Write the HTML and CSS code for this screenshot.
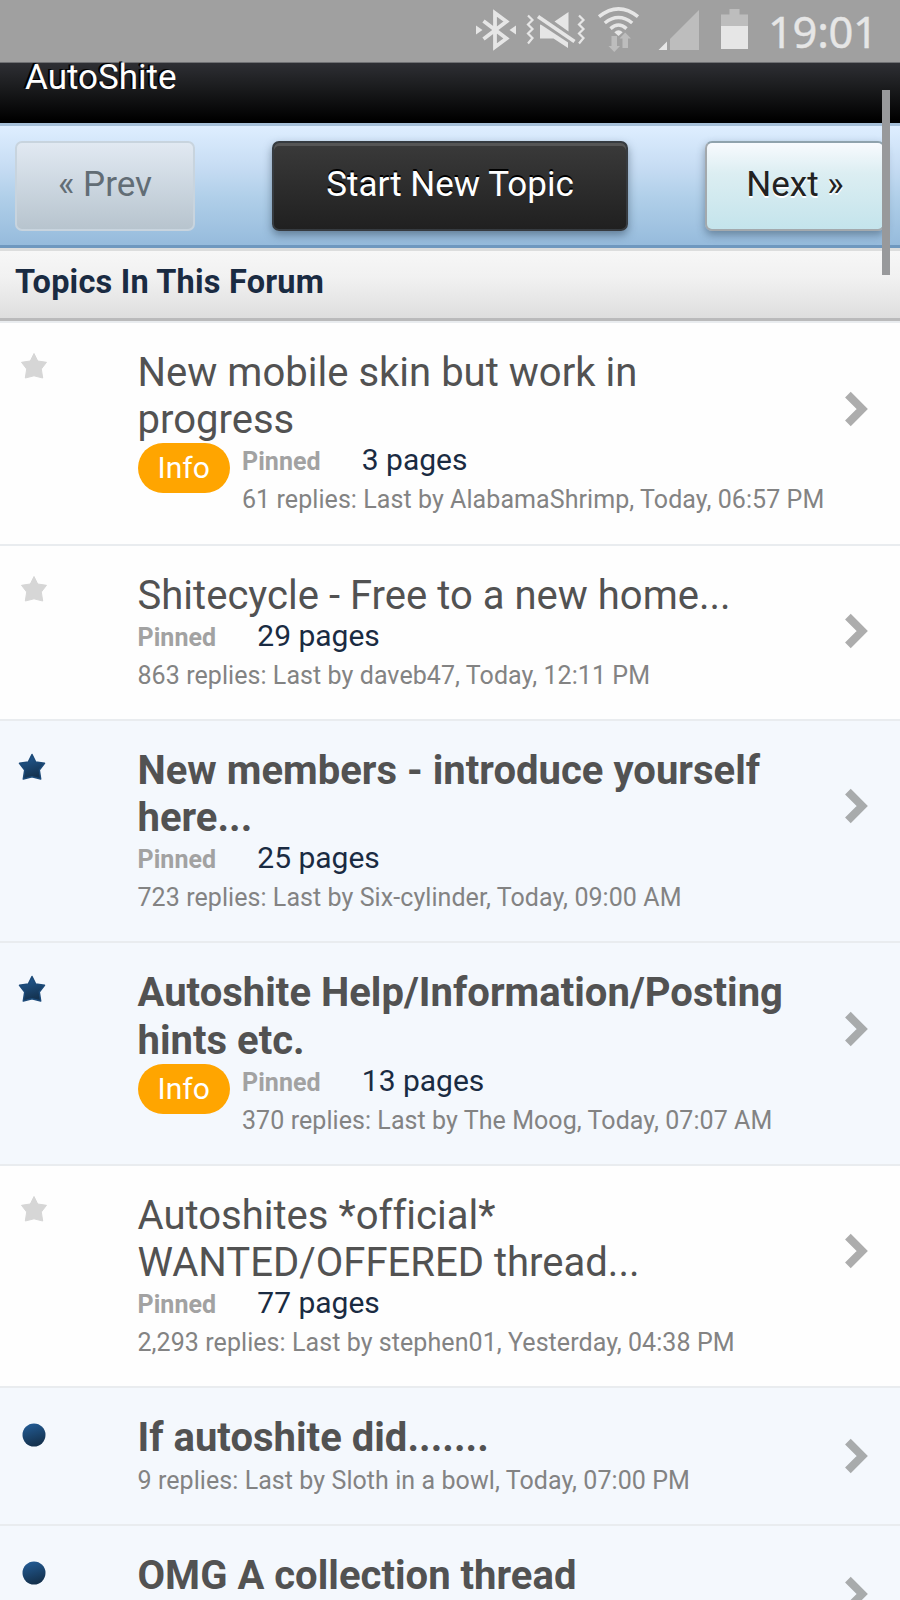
FILE: index.html
```html
<!DOCTYPE html>
<html lang="en">
<head>
<meta charset="utf-8">
<title>AutoShite</title>
<link rel="stylesheet" href="styles.css">
</head>
<body>
<svg class="defs" width="0" height="0" aria-hidden="true">
  <defs>
    <linearGradient id="navy" x1="0" y1="0" x2="0.3" y2="1"><stop offset="0" stop-color="#245f9a"/><stop offset="1" stop-color="#14324f"/></linearGradient>
    <symbol id="star" viewBox="0 0 28 28"><path d="M14 1.500 17.700 9 26.500 10.300 21.300 17 22.700 26 14 23.800 5.300 26 6.700 17 1.500 10.300 10.300 9Z" stroke-linejoin="round"/></symbol>
    <symbol id="dot" viewBox="0 0 24 24"><circle cx="12" cy="12" r="11.5"/></symbol>
    <symbol id="chevron" viewBox="0 0 23 36"><path d="M2.900 3.700 17.200 18 2.900 32.300" fill="none" stroke="currentColor" stroke-width="8"/></symbol>
  </defs>
</svg>
<div class="screen">
  <header class="status">
    <svg class="status-icons" width="300" height="62" viewBox="460 0 300 62">
      <g fill="#e6e6e6">
        <path d="M476 25.500V34.500L482.500 30ZM516 25.500V34.500L509.500 30Z"/>
        <path d="M483.500 21 506.500 38.500 495 47V13L506.500 21.500 483.500 39" fill="none" stroke="#e6e6e6" stroke-width="3.800"/>
        <path d="M540 24.500H544L558 34 568 41.500V48L553.500 38.500H540ZM554.500 21.500 568.500 12V31.500Z"/>
        <path d="M537 17 575 42" stroke="#a0a0a0" stroke-width="8.500"/>
        <path d="M538 16.500 574.500 41.500" stroke="#e6e6e6" stroke-width="3.800"/>
        <path d="M528 15.500 532.500 20 528 24.500 532.500 29 528 33.500 532.500 38 528 43.500M579 15.500 583.500 20 579 24.500 583.500 29 579 33.500 583.500 38 579 43.500" fill="none" stroke="#e6e6e6" stroke-width="2.200"/>
        <path d="M599 16.700Q618.500 1 638 16.700M604.800 23Q618.500 12 632.200 23M610.500 28.600Q618.500 21.500 626.500 28.600" fill="none" stroke="#e6e6e6" stroke-width="3.500"/>
        <path d="M614.300 32.300Q618.500 28 622.700 32.300L618.500 36Z"/>
        <path d="M658.500 50 667 41.500V50ZM721 26H748V49H721Z"/>
      </g>
      <g fill="#bdbdbd">
        <path d="M611.500 36H617V46H620L614.300 52 608.500 46H611.500ZM622.500 48H628V38.500H631L625.200 32.500 619.500 38.500H622.500Z"/>
        <path d="M670 50V39L699 10V50ZM721 26V14.500H729.500V9H739.500V14.500H748V26Z"/>
      </g>
    </svg>
    <span class="clock">19:01</span>
  </header>
  <div class="brand"><span>AutoShite</span></div>
  <nav class="toolbar">
    <a class="btn btn-prev">« Prev</a>
    <a class="btn btn-new">Start New Topic</a>
    <a class="btn btn-next">Next »</a>
  </nav>
  <h2 class="section"><span>Topics In This Forum</span></h2>
  <main class="topics">
    <article class="topic">
      <svg class="mark star-read"><use href="#star"/></svg>
      <div class="body"><h3>New mobile skin but work in<br>progress</h3>
        <div class="details"><span class="badge">Info</span><div><div class="meta"><b>Pinned</b><span class="pages">3 pages</span></div><p>61 replies: Last by AlabamaShrimp, Today, 06:57 PM</p></div></div></div>
      <svg class="chevron"><use href="#chevron"/></svg>
    </article>
    <article class="topic">
      <svg class="mark star-read"><use href="#star"/></svg>
      <div class="body"><h3>Shitecycle - Free to a new home...</h3>
        <div class="meta"><b>Pinned</b><span class="pages">29 pages</span></div><p>863 replies: Last by daveb47, Today, 12:11 PM</p></div>
      <svg class="chevron"><use href="#chevron"/></svg>
    </article>
    <article class="topic unread">
      <svg class="mark star-new"><use href="#star"/></svg>
      <div class="body"><h3>New members - introduce yourself<br>here...</h3>
        <div class="meta"><b>Pinned</b><span class="pages">25 pages</span></div><p>723 replies: Last by Six-cylinder, Today, 09:00 AM</p></div>
      <svg class="chevron"><use href="#chevron"/></svg>
    </article>
    <article class="topic unread">
      <svg class="mark star-new"><use href="#star"/></svg>
      <div class="body"><h3>Autoshite Help/Information/Posting<br>hints etc.</h3>
        <div class="details"><span class="badge">Info</span><div><div class="meta"><b>Pinned</b><span class="pages">13 pages</span></div><p>370 replies: Last by The Moog, Today, 07:07 AM</p></div></div></div>
      <svg class="chevron"><use href="#chevron"/></svg>
    </article>
    <article class="topic">
      <svg class="mark star-read"><use href="#star"/></svg>
      <div class="body"><h3>Autoshites *official*<br>WANTED/OFFERED thread...</h3>
        <div class="meta"><b>Pinned</b><span class="pages">77 pages</span></div><p>2,293 replies: Last by stephen01, Yesterday, 04:38 PM</p></div>
      <svg class="chevron"><use href="#chevron"/></svg>
    </article>
    <article class="topic unread short">
      <svg class="mark dot"><use href="#dot"/></svg>
      <div class="body"><h3>If autoshite did.......</h3><p>9 replies: Last by Sloth in a bowl, Today, 07:00 PM</p></div>
      <svg class="chevron"><use href="#chevron"/></svg>
    </article>
    <article class="topic unread short">
      <svg class="mark dot"><use href="#dot"/></svg>
      <div class="body"><h3>OMG A collection thread</h3></div>
      <svg class="chevron"><use href="#chevron"/></svg>
    </article>
  </main>
  <div class="scrollbar"></div>
</div>
</body>
</html>
```
FILE: styles.css
```css
* { box-sizing: border-box; }
body { margin: 0; font-family: Roboto, sans-serif; background: #fff; }
.defs { position: absolute; }
.screen { position: relative; width: 900px; height: 1600px; overflow: hidden; }
.status { display: flex; height: 63px; padding-left: 460px; background: #a0a0a0; border-bottom: 1px solid #707174; }
.status-icons { flex: none; }
.clock { margin-left: 8px; font: 43.500px/62px "Noto Sans", sans-serif; letter-spacing: -.3px; color: #e6e6e6; -webkit-text-stroke: .4px #e6e6e6; white-space: nowrap; }
.brand { height: 60px; padding-left: 25px; color: #fff; background: linear-gradient(#2e2f34, #1b1c1e 40%, #000 95%); }
.brand span { display: block; position: relative; top: -6px; font-size: 35px; line-height: 42px; text-shadow: -2px -1px 0 #000; }
.toolbar { display: flex; align-items: flex-start; justify-content: space-between; height: 125px; padding: 16px 15px 0; border-top: 3px solid #a5bfd8; border-bottom: 3px solid #6f98bf; background: linear-gradient(#deeeff, #c6dcf3 35%, #b0cfe9 60%, #96bbdc); }
.btn { height: 90px; margin-top: -1px; border: 2px solid; border-radius: 7px; font-size: 35px; line-height: 83px; text-align: center; white-space: nowrap; }
.btn-prev { width: 180px; color: #626d75; border-color: #c8d4de; background: linear-gradient(#e1e9f2, #b7c4ce); }
.btn-new { width: 356px; color: #fff; border-color: #363b40; background: linear-gradient(#3a3a3a, #202020); text-shadow: 0 -2px 0 #000; box-shadow: inset 0 3px 0 #555, 0 4px 8px rgba(40,60,80,.5); }
.btn-next { width: 180px; color: #222; border-color: #8fa2ad #a3a9ad #a3a9ad; background: linear-gradient(#f8fafe, #dceef2 35%, #c4e4ec); text-shadow: 0 2px 0 #fff; box-shadow: 0 4px 8px rgba(40,60,80,.45); }
.section { height: 73px; margin: 0; padding-left: 15px; border-top: 3px solid #dcdddd; border-bottom: 3px solid #bababb; background: linear-gradient(#f7f7f7, #f1f1f1 40%, #dedede); font-size: 32.500px; letter-spacing: .2px; line-height: 63.500px; color: #1a2b42; }
.section span { display: block; }
.topics { border-top: 2px solid #e9ecef; }
.topic { display: flex; padding: 26px 32px 17.100px 0; border-bottom: 2px solid #e9ecef; background: #fefefe; }
.unread { background: #f4f8fd; }
.mark { flex: none; overflow: visible; }
.star-read { width: 28px; height: 28px; margin: 3px 89.500px 0 20px; fill: #d6d6d6; stroke: #d6d6d6; }
.star-new { width: 28px; height: 28px; margin: 6px 92px 0 17.500px; fill: url(#navy); stroke: #1c4a78; stroke-width: 1.500px; }
.dot { width: 24px; height: 24px; margin: 9px 91.500px 0 22px; fill: url(#navy); }
.body { flex: 1; min-width: 0; white-space: nowrap; color: #838383; font-size: 25px; letter-spacing: .07px; }
h3 { margin: 0; font-size: 40px; line-height: 47.200px; font-weight: 400; letter-spacing: .02px; font-variant-ligatures: none; color: #525252; }
.unread h3 { font-weight: 700; }
.meta { display: flex; align-items: baseline; height: 38px; line-height: 38px; }
.meta b { color: #a2a2a2; }
.pages { margin-left: 41px; font-size: 30px; line-height: 34px; letter-spacing: 0; color: #1a2b42; }
p { margin: 0; height: 45px; line-height: 38px; }
.details { display: flex; gap: 12px; }
.badge { width: 92.500px; height: 50px; border-radius: 25px; background: #ffa500; color: #fff; font-size: 30px; line-height: 49px; text-align: center; }
.chevron { flex: none; width: 23px; height: 36px; margin-top: 41.500px; color: #adadad; }
.unread .chevron { color: #a8abac; }
.short .chevron { margin-top: 24px; }
.scrollbar { position: absolute; left: 882px; top: 90px; width: 8px; height: 185px; background: #98999b; }
```
